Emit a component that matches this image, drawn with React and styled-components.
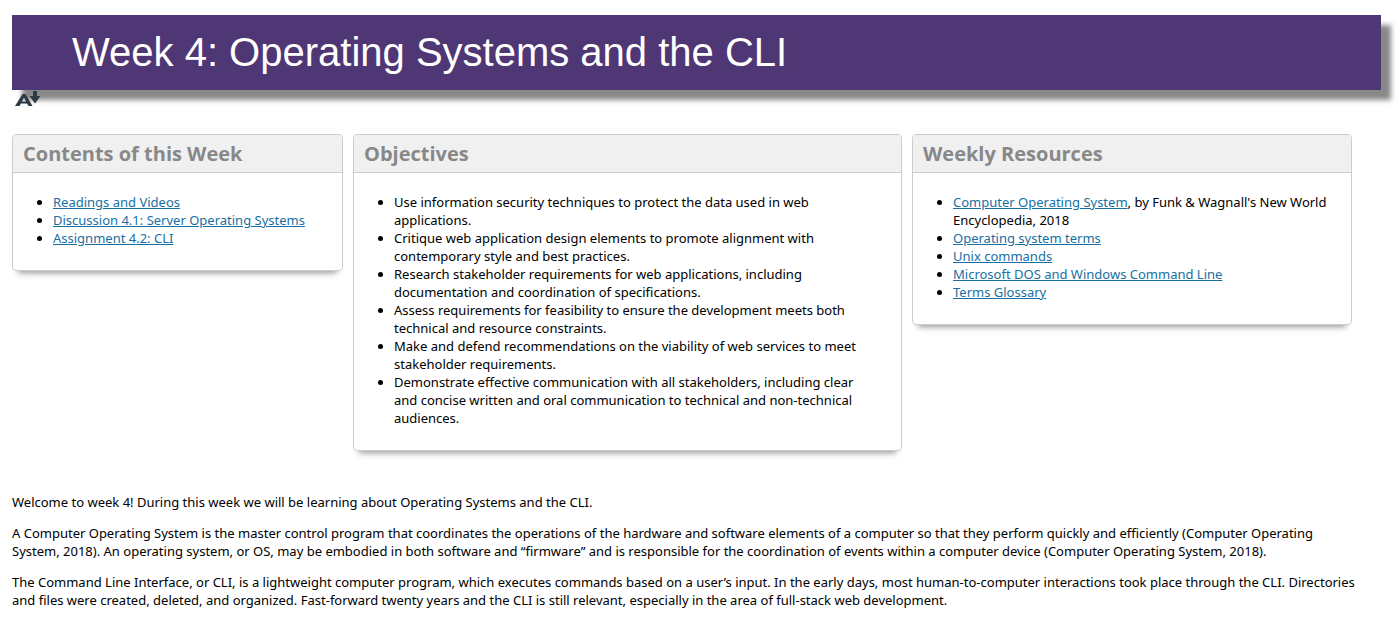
import React from 'react';
import styled, { createGlobalStyle } from 'styled-components';

const Global = createGlobalStyle`
  body {
    margin: 0;
    background: #fff;
    color: #000;
    font: 13px/18px "Noto Sans", "Open Sans", sans-serif;
  }
`;
const Page = styled.main`
  padding: 15px 19px 16px 12px;
`;
const Banner = styled.h1`
  margin: 0;
  padding: 0 60px;
  background: #4f3674;
  color: #fff;
  font: 400 40px/75px "Liberation Sans", Arial, sans-serif;
  box-shadow: 10px 10px 5px #888;
`;
const Tools = styled.div`
  display: flex;
  height: 18px;
  padding-left: 3px;
`;
const ToolButton = styled.button`
  position: relative;
  display: flex;
  width: 26px;
  height: 18px;
  padding: 0;
  border: 0;
  background: none;
  cursor: pointer;
`;
const Columns = styled.section`
  display: grid;
  grid-template-columns: 331fr 549fr 440fr;
  align-items: start;
  gap: 10px;
  margin: 26px 29px 42px 0;
`;
const Card = styled.section`
  border: 1px solid #ccc;
  border-radius: 4px;
  box-shadow: 0 8px 6px -6px #999;
  overflow: hidden;
`;
const CardTitle = styled.h2`
  margin: 0;
  padding: 0 10px;
  border-bottom: 1px solid #ccc;
  background: #f0f0f0;
  color: #888;
  font-family: "Open Sans", sans-serif;
  font-size: 20px;
  font-weight: 700;
  line-height: 37px;
`;
const List = styled.ul`
  margin: 0;
  padding: 20px 23px 23px 40px;
`;
const Link = styled.a`
  color: #176fa3;
  text-decoration: underline;
`;
const Intro = styled.article`
  padding-right: 23px;
`;
const Text = styled.p`
  margin: 0 0 13px;
  &:last-child { margin-bottom: 0; }
`;

function Panel({ title, children }) {
  return (
    <Card>
      <CardTitle>{title}</CardTitle>
      <List>{children}</List>
    </Card>
  );
}

const objectives = [
  'Use information security techniques to protect the data used in web applications.',
  'Critique web application design elements to promote alignment with contemporary style and best practices.',
  'Research stakeholder requirements for web applications, including documentation and coordination of specifications.',
  'Assess requirements for feasibility to ensure the development meets both technical and resource constraints.',
  'Make and defend recommendations on the viability of web services to meet stakeholder requirements.',
  'Demonstrate effective communication with all stakeholders, including clear and concise written and oral communication to technical and non-technical audiences.',
];
const contents = ['Readings and Videos', 'Discussion 4.1: Server Operating Systems', 'Assignment 4.2: CLI'];
const resources = ['Operating system terms', 'Unix commands', 'Microsoft DOS and Windows Command Line', 'Terms Glossary'];

export default function App() {
  return (
    <>
      <Global />
      <Page>
        <Banner>Week 4: Operating Systems and the CLI</Banner>
        <Tools>
          <ToolButton aria-label="Download alternative formats">
            <svg width="26" height="18" viewBox="0 0 26 18" fill="#2d3b45">
              <path fillRule="evenodd" d="M0 16 7.500 4h3L17.500 16h-4l-1.500-2.500H6L4.500 16zM7 11.500h4L9 7.500z" />
              <path d="M18 1h4v5h3.500L20 13.500 14.500 6H18z" />
            </svg>
          </ToolButton>
        </Tools>
        <Columns>
          <Panel title="Contents of this Week">
            {contents.map((c) => <li key={c}><Link href="#">{c}</Link></li>)}
          </Panel>
          <Panel title="Objectives">
            {objectives.map((o) => <li key={o}>{o}</li>)}
          </Panel>
          <Panel title="Weekly Resources">
            <li><Link href="#">Computer Operating System</Link>, by Funk &amp; Wagnall's New World Encyclopedia, 2018</li>
            {resources.map((r) => <li key={r}><Link href="#">{r}</Link></li>)}
          </Panel>
        </Columns>
        <Intro>
          <Text>Welcome to week 4! During this week we will be learning about Operating Systems and the CLI.</Text>
          <Text>A Computer Operating System is the master control program that coordinates the operations of the hardware and software elements of a computer so that they perform quickly and efficiently (Computer Operating System, 2018). An operating system, or OS, may be embodied in both software and “firmware” and is responsible for the coordination of events within a computer device (Computer Operating System, 2018).</Text>
          <Text>The Command Line Interface, or CLI, is a lightweight computer program, which executes commands based on a user’s input. In the early days, most human-to-computer interactions took place through the CLI. Directories and files were created, deleted, and organized. Fast-forward twenty years and the CLI is still relevant, especially in the area of full-stack web development.</Text>
        </Intro>
      </Page>
    </>
  );
}
